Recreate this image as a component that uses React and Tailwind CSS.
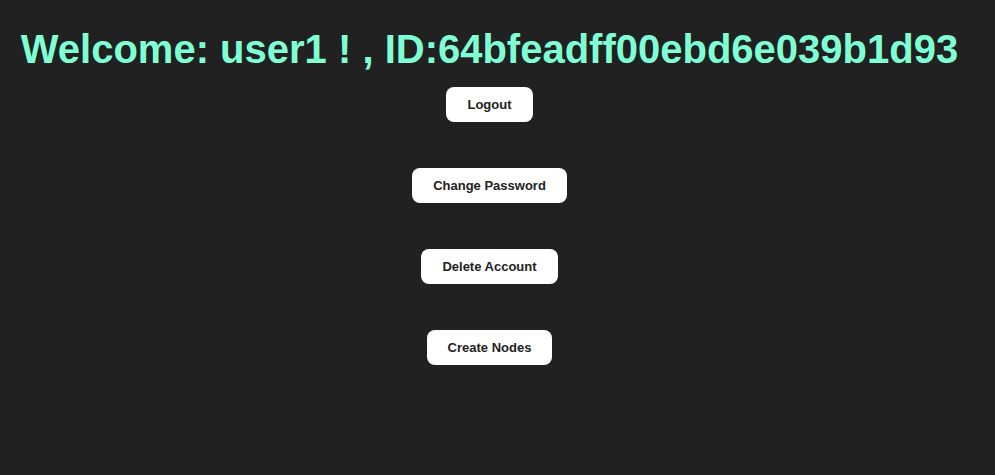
import React from 'react';

const actions = ['Logout', 'Change Password', 'Delete Account', 'Create Nodes'];

const App = () => {
  return (
    <div className="min-h-[475px] w-full bg-[#212121] font-['Liberation_Sans',Arial,sans-serif]">
      <div className="flex w-[979px] flex-col items-center">
        <h1 className="mt-[21px] text-[40px] font-bold leading-[56px] text-[#7fffd4]">
          Welcome: user1 ! , ID:64bfeadff00ebd6e039b1d93
        </h1>
        <div className="mt-[10px] flex flex-col items-center gap-[46px]">
          {actions.map((label) => (
            <button
              key={label}
              className="h-[35px] rounded-lg bg-white px-[21px] text-[13px] font-bold text-[#222]"
            >
              {label}
            </button>
          ))}
        </div>
      </div>
    </div>
  );
};

export default App;
